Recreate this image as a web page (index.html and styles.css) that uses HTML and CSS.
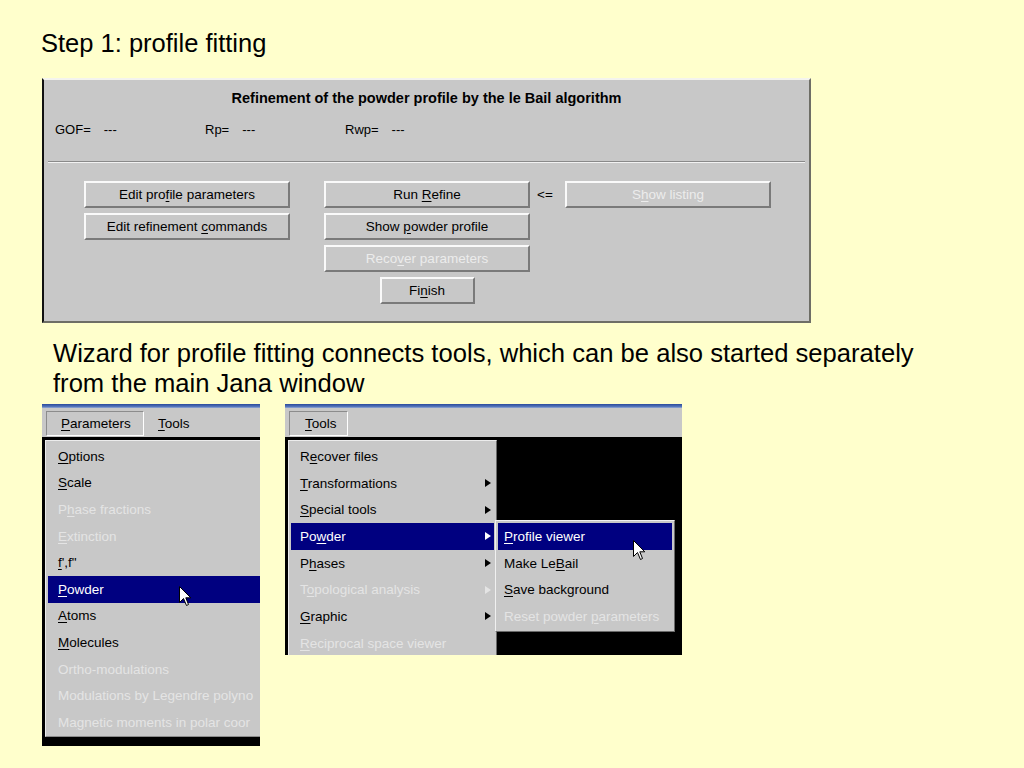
FILE: index.html
```html
<!DOCTYPE html>
<html>
<head>
<meta charset="utf-8">
<link rel="stylesheet" href="styles.css">
</head>
<body>
<h1 class="title">Step 1: profile fitting</h1>

<div class="dialog">
  <div class="dlg-title">Refinement of the powder profile by the le Bail algorithm</div>
  <div class="stats">
    <div class="stat s1"><span>GOF=</span><span>---</span></div>
    <div class="stat s2"><span>Rp=</span><span>---</span></div>
    <div class="stat s3"><span>Rwp=</span><span>---</span></div>
  </div>
  <div class="sep"></div>
  <div class="btn-grid">
    <div class="btn c1 r1"><span>Edit pro<u>f</u>ile parameters</span></div>
    <div class="btn c2 r1"><span>Run <u>R</u>efine</span></div>
    <div class="arrow-lbl r1">&lt;=</div>
    <div class="btn c3 r1 disabled"><span>S<u>h</u>ow listing</span></div>
    <div class="btn c1 r2"><span>Edit refinement <u>c</u>ommands</span></div>
    <div class="btn c2 r2"><span>Show <u>p</u>owder profile</span></div>
    <div class="btn c2 r3 disabled"><span>Reco<u>v</u>er parameters</span></div>
    <div class="btn c2 r4 finish"><span>Fi<u>n</u>ish</span></div>
  </div>
</div>

<p class="wizard">Wizard for profile fitting connects tools, which can be also started separately<br>from the main Jana window</p>

<div class="shots">
  <div class="shot shot-left">
    <div class="strip"></div>
    <div class="menubar">
      <div class="tab pressed"><span><u>P</u>arameters</span></div>
      <div class="tab"><span><u>T</u>ools</span></div>
    </div>
    <div class="below">
      <div class="popup popup-left">
        <div class="item"><span><u>O</u>ptions</span></div>
        <div class="item"><span><u>S</u>cale</span></div>
        <div class="item dis"><span>P<u>h</u>ase fractions</span></div>
        <div class="item dis"><span><u>E</u>xtinction</span></div>
        <div class="item"><span><u>f</u>',f"</span></div>
        <div class="item sel"><span><u>P</u>owder</span></div>
        <div class="item"><span><u>A</u>toms</span></div>
        <div class="item"><span><u>M</u>olecules</span></div>
        <div class="item dis"><span>Ortho-modulations</span></div>
        <div class="item dis"><span>Modulations by Legendre polyno</span></div>
        <div class="item dis"><span>Ma<u>g</u>netic moments in polar coor</span></div>
      </div>
    </div>
    <svg class="cursor cursor-left" width="13" height="21" viewBox="0 0 13 21"><path d="M0.5 0.5 L0.5 16.5 L4.5 12.5 L7.5 19.5 L9.5 18.5 L6.8 11.8 L11.8 11.8 Z" fill="#fff" stroke="#000" stroke-width="1"/></svg>
  </div>

  <div class="shot shot-right">
    <div class="strip"></div>
    <div class="menubar">
      <div class="tab pressed tools"><span><u>T</u>ools</span></div>
    </div>
    <div class="below">
      <div class="popup popup-right">
        <div class="item"><span>R<u>e</u>cover files</span></div>
        <div class="item sub"><span><u>T</u>ransformations</span><i class="tri"></i></div>
        <div class="item sub"><span><u>S</u>pecial tools</span><i class="tri"></i></div>
        <div class="item sub sel"><span>Po<u>w</u>der</span><i class="tri"></i></div>
        <div class="item sub"><span>P<u>h</u>ases</span><i class="tri"></i></div>
        <div class="item sub dis"><span>T<u>o</u>pological analysis</span><i class="tri"></i></div>
        <div class="item sub"><span><u>G</u>raphic</span><i class="tri"></i></div>
        <div class="item dis"><span><u>R</u>eciprocal space viewer</span></div>
      </div>
    </div>
    <div class="submenu">
      <div class="item sel"><span><u>P</u>rofile viewer</span></div>
      <div class="item"><span>Make Le<u>B</u>ail</span></div>
      <div class="item"><span><u>S</u>ave background</span></div>
      <div class="item dis"><span>Reset powder <u>p</u>arameters</span></div>
    </div>
    <svg class="cursor cursor-right" width="13" height="21" viewBox="0 0 13 21"><path d="M0.5 0.5 L0.5 16.5 L4.5 12.5 L7.5 19.5 L9.5 18.5 L6.8 11.8 L11.8 11.8 Z" fill="#fff" stroke="#000" stroke-width="1"/></svg>
  </div>
</div>
</body>
</html>
```

FILE: styles.css
```css
html, body {
  margin: 0;
  padding: 0;
}
body {
  background: #ffffcc;
  width: 1024px;
  height: 768px;
  overflow: hidden;
  font-family: "Liberation Sans", Arial, sans-serif;
  color: #000;
}
.title {
  margin: 28px 0 0 41px;
  font-size: 25.5px;
  line-height: 30px;
  font-weight: normal;
}

/* ---------- dialog ---------- */
.dialog {
  box-sizing: border-box;
  margin: 20px 0 0 42px;
  width: 769px;
  height: 245px;
  background: #c8c8c8;
  border-top: 2px solid #f4f4ee;
  border-left: 2px solid #111;
  border-right: 2px solid #6e6e66;
  border-bottom: 2px solid #6e6e66;
  font-size: 13.5px;
}
.dlg-title {
  margin-top: 9px;
  text-align: center;
  font-weight: bold;
  font-size: 14.5px;
  line-height: 18px;
}
.stats {
  display: flex;
  margin: 15px 0 0 11px;
  font-size: 13px;
  line-height: 16px;
}
.stat {
  display: flex;
  gap: 13px;
}
.s1 { width: 150px; }
.s2 { width: 140px; }
.sep {
  margin: 23px 4px 0 4px;
  height: 1px;
  background: #8a8a8a;
  border-bottom: 1px solid #f2f2f2;
}
.btn-grid {
  display: grid;
  grid-template-columns: 206px 34px 206px 35px 206px;
  grid-template-rows: repeat(4, 27px);
  row-gap: 5px;
  margin: 18px 0 0 40px;
}
.btn {
  box-sizing: border-box;
  display: flex;
  align-items: center;
  justify-content: center;
  background: #c8c8c8;
  border-top: 2px solid #fafafa;
  border-left: 2px solid #fafafa;
  border-right: 2px solid #7a7a7a;
  border-bottom: 2px solid #7a7a7a;
  white-space: nowrap;
}
.btn.disabled { color: #ececec; }
.c1 { grid-column: 1; }
.c2 { grid-column: 3; }
.c3 { grid-column: 5; }
.r1 { grid-row: 1; }
.r2 { grid-row: 2; }
.r3 { grid-row: 3; }
.r4 { grid-row: 4; }
.finish {
  width: 95px;
  justify-self: center;
}
.arrow-lbl {
  grid-column: 4;
  display: flex;
  align-items: center;
  padding-left: 7px;
}
u {
  text-decoration: underline;
  text-underline-offset: 2px;
}

/* ---------- wizard text ---------- */
.wizard {
  margin: 15px 0 0 53px;
  font-size: 25.6px;
  line-height: 30px;
}

/* ---------- screenshots ---------- */
.shots {
  display: flex;
  align-items: flex-start;
  gap: 25px;
  margin: 6px 0 0 42px;
}
.shot {
  position: relative;
  display: flex;
  flex-direction: column;
  background: #000;
  overflow: hidden;
  font-size: 13.5px;
}
.shot-left { width: 218px; height: 342px; }
.shot-right { width: 397px; height: 251px; }
.strip {
  height: 4px;
  flex: none;
  background: linear-gradient(to bottom, #2a4a9c, #5878bc 70%, #9cb0d8);
}
.menubar {
  flex: none;
  box-sizing: border-box;
  height: 29px;
  display: flex;
  gap: 14px;
  padding: 3px 0 0 4px;
  background: #c8c8c8;
}
.tab {
  box-sizing: border-box;
  height: 25px;
  display: flex;
  align-items: center;
  line-height: 16px;
}
.tab.pressed {
  width: 98px;
  padding-left: 14px;
  border-top: 1px solid #8c8c8c;
  border-left: 1px solid #8c8c8c;
  border-right: 1px solid #fff;
  border-bottom: 1px solid #fff;
}
.tab.pressed.tools {
  width: 59px;
  padding-left: 15px;
}
.below {
  flex: 1;
  display: flex;
  align-items: flex-start;
  padding: 3px 0 0 3px;
  min-height: 0;
}
.popup {
  box-sizing: border-box;
  background: #c8c8c8;
  border-top: 1px solid #ececec;
  border-left: 1px solid #ececec;
  padding: 2px;
  overflow: hidden;
}
.popup-left {
  flex: 1;
  height: 297px;
  padding-right: 0;
  border-bottom: 1px solid #8a8a8a;
}
.popup-right {
  width: 209px;
  height: 215px;
  border-right: 1px solid #6a6a6a;
}
.item {
  height: 26.6px;
  display: flex;
  align-items: center;
  white-space: nowrap;
  padding-left: 10px;
}
.popup-right .item {
  height: 26.7px;
  padding-left: 9px;
}
.item.sub {
  justify-content: space-between;
  padding-right: 3px;
}
.item.dis { color: #e4e4e4; }
.item.sel {
  background: #000080;
  color: #fff;
}
.tri {
  width: 0;
  height: 0;
  border-top: 4.5px solid transparent;
  border-bottom: 4.5px solid transparent;
  border-left: 6px solid #000;
}
.item.sel .tri { border-left-color: #fff; }
.item.dis .tri { border-left-color: #e4e4e4; }

.submenu {
  position: absolute;
  left: 210px;
  top: 116px;
  box-sizing: border-box;
  width: 180px;
  height: 112px;
  padding: 2px;
  background: #c8c8c8;
  border-top: 1px solid #f0f0f0;
  border-left: 1px solid #f0f0f0;
  border-right: 1px solid #6a6a6a;
  border-bottom: 1px solid #6a6a6a;
}
.submenu .item {
  height: 26.7px;
  padding-left: 6px;
}
.cursor {
  position: absolute;
}
.cursor-left { left: 137px; top: 182px; }
.cursor-right { left: 348px; top: 136px; }
```
